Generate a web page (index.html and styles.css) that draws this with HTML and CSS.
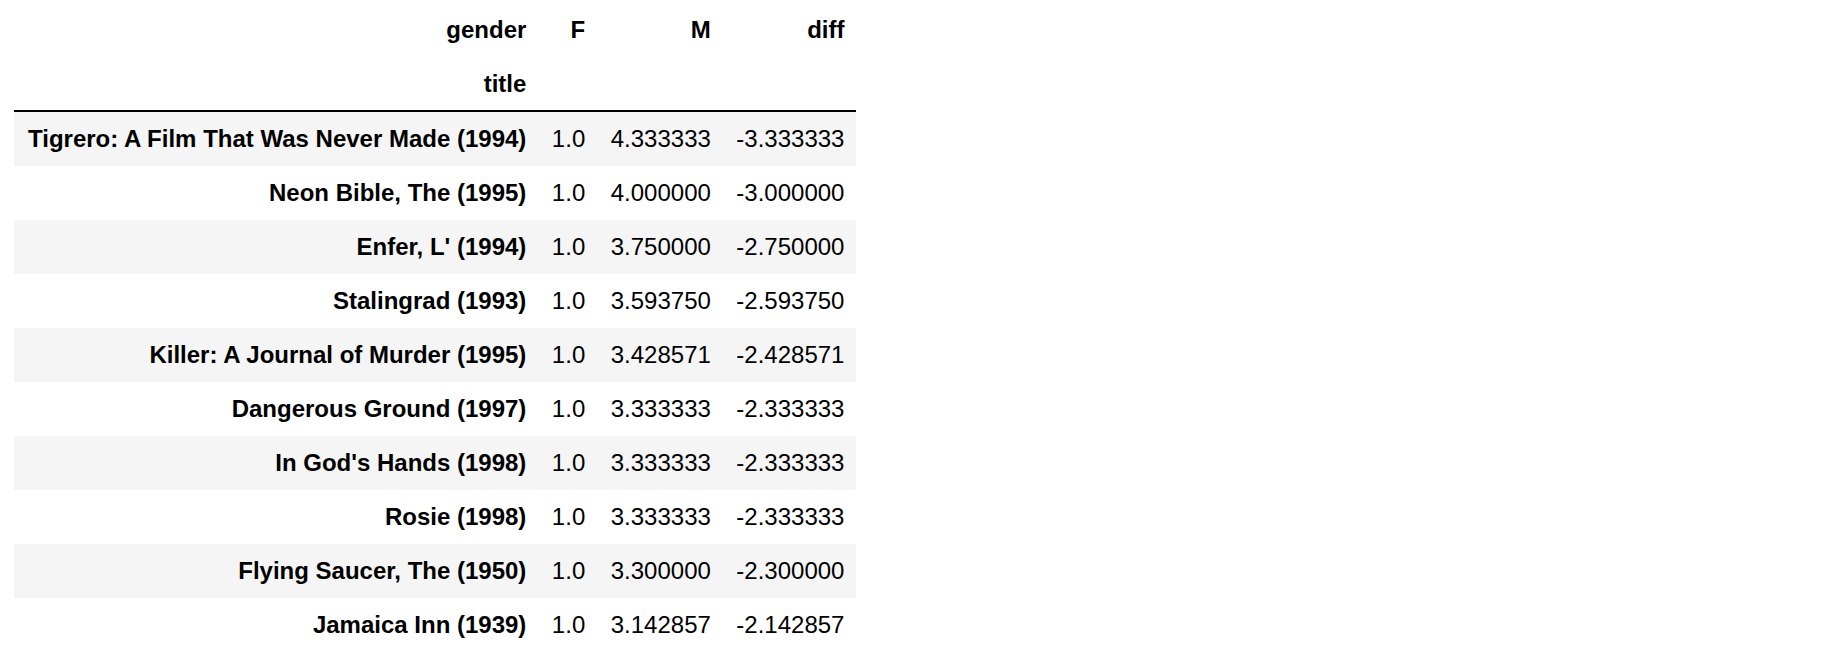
FILE: index.html
```html
<!DOCTYPE html>
<html>
<head>
<meta charset="utf-8">
<link rel="stylesheet" href="styles.css">
</head>
<body>
<div class="output">
<table class="dataframe">
  <thead>
    <tr>
      <th class="index-name">gender</th>
      <th>F</th>
      <th>M</th>
      <th>diff</th>
    </tr>
    <tr>
      <th class="index-name">title</th>
      <th></th>
      <th></th>
      <th></th>
    </tr>
  </thead>
  <tbody>
    <tr><th>Tigrero: A Film That Was Never Made (1994)</th><td>1.0</td><td>4.333333</td><td>-3.333333</td></tr>
    <tr><th>Neon Bible, The (1995)</th><td>1.0</td><td>4.000000</td><td>-3.000000</td></tr>
    <tr><th>Enfer, L' (1994)</th><td>1.0</td><td>3.750000</td><td>-2.750000</td></tr>
    <tr><th>Stalingrad (1993)</th><td>1.0</td><td>3.593750</td><td>-2.593750</td></tr>
    <tr><th>Killer: A Journal of Murder (1995)</th><td>1.0</td><td>3.428571</td><td>-2.428571</td></tr>
    <tr><th>Dangerous Ground (1997)</th><td>1.0</td><td>3.333333</td><td>-2.333333</td></tr>
    <tr><th>In God's Hands (1998)</th><td>1.0</td><td>3.333333</td><td>-2.333333</td></tr>
    <tr><th>Rosie (1998)</th><td>1.0</td><td>3.333333</td><td>-2.333333</td></tr>
    <tr><th>Flying Saucer, The (1950)</th><td>1.0</td><td>3.300000</td><td>-2.300000</td></tr>
    <tr><th>Jamaica Inn (1939)</th><td>1.0</td><td>3.142857</td><td>-2.142857</td></tr>
  </tbody>
</table>
</div>
</body>
</html>
```

FILE: styles.css
```css
html, body {
  margin: 0;
  padding: 0;
  background: #ffffff;
}

.output {
  padding: 2px 0 0 14px;
}

.dataframe {
  border-collapse: collapse;
  border-spacing: 0;
  border: none;
  font-family: "Liberation Sans", Arial, Helvetica, sans-serif;
  font-size: 24px;
  color: #000000;
}

.dataframe th,
.dataframe td {
  text-align: right;
  vertical-align: middle;
  padding: 12px 12px 12px 13.5px;
  line-height: 30px;
  white-space: nowrap;
  border: none;
}

.dataframe th:first-child {
  padding-left: 14px;
}

.dataframe th {
  font-weight: bold;
}

.dataframe td {
  font-weight: normal;
}

.dataframe thead {
  border-bottom: 2px solid #000000;
}

.dataframe thead th {
  padding-top: 13px;
  padding-bottom: 11px;
}

.dataframe tbody tr:nth-child(odd) {
  background: #f5f5f5;
}
```
